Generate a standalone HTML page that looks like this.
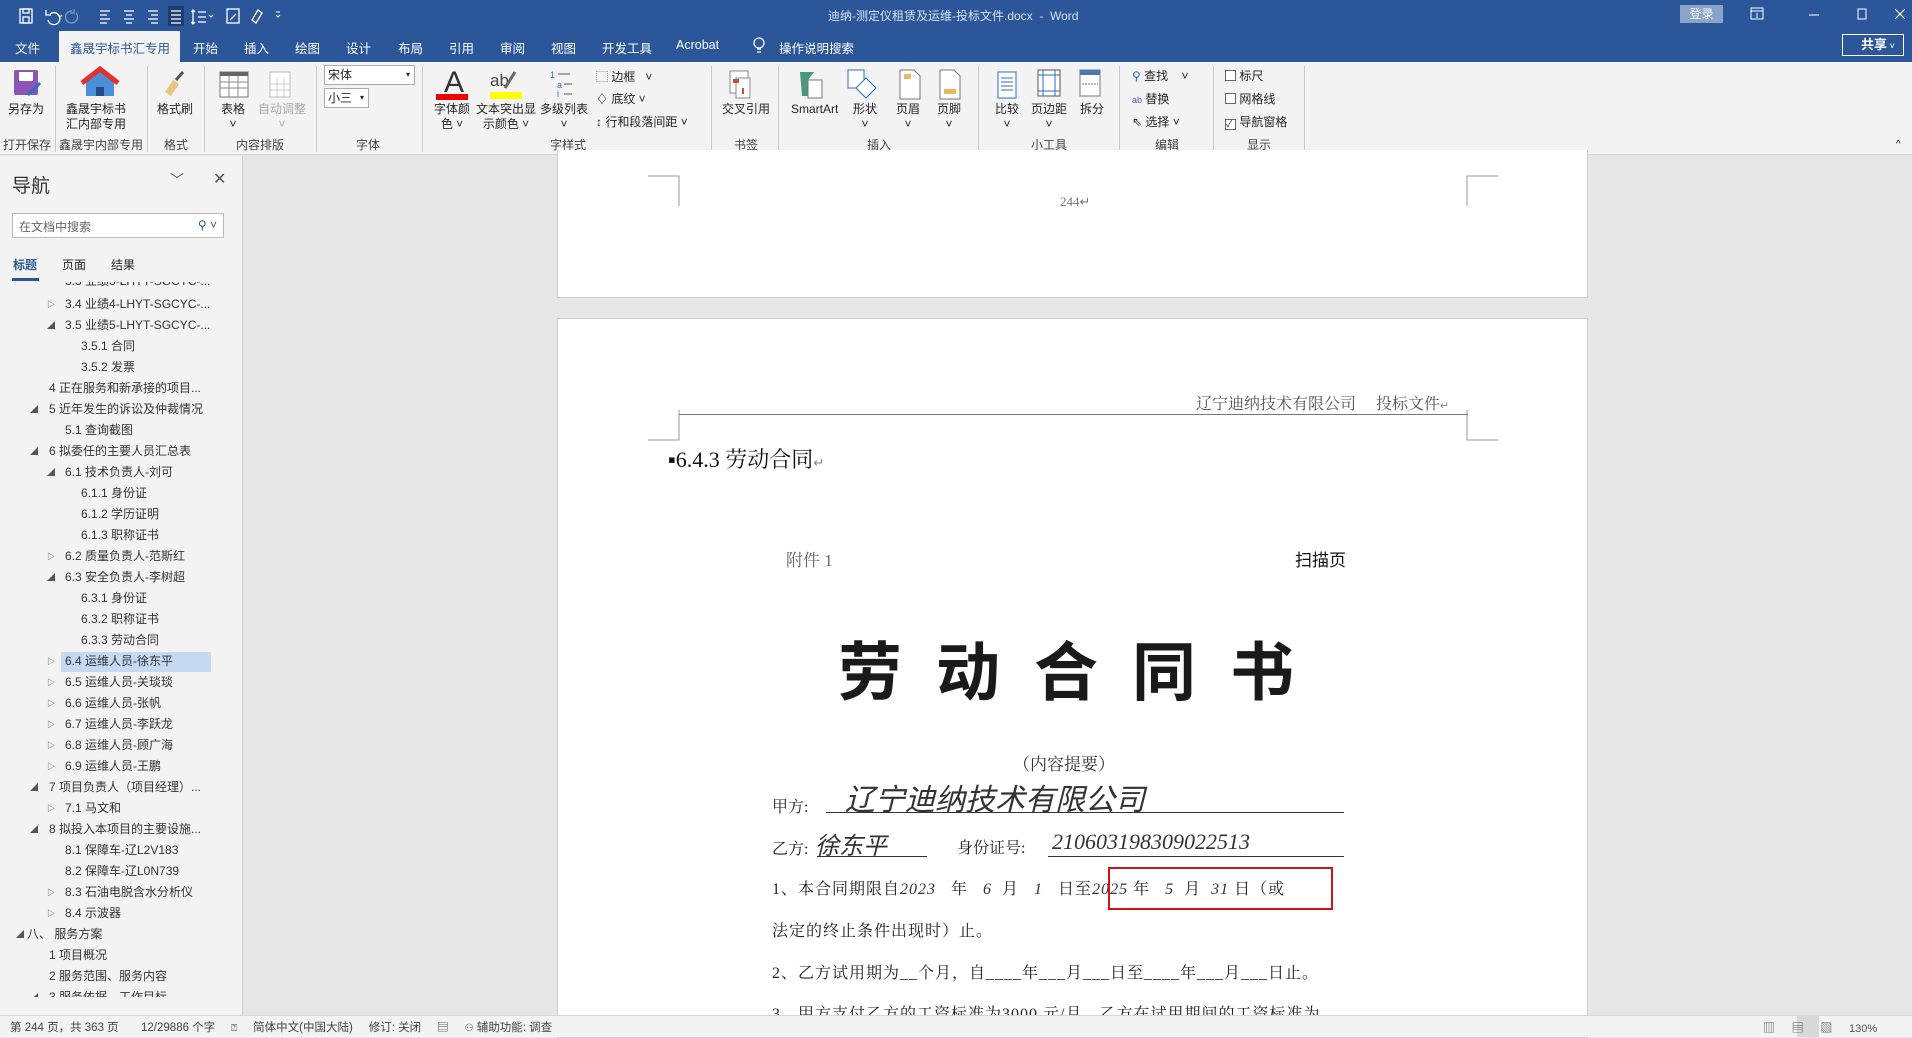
<!DOCTYPE html>
<html><head><meta charset="utf-8">
<style>
*{margin:0;padding:0;box-sizing:border-box}
body{width:1912px;height:1037px;overflow:hidden;position:relative;background:#e6e6e6;font-family:"Liberation Sans","Noto Sans CJK SC",sans-serif;font-size:12px;color:#262626}
.a{position:absolute;white-space:nowrap}
#title{left:0;top:0;width:1912px;height:31px;background:#2b579a}
#tabs{left:0;top:31px;width:1912px;height:31px;background:#2b579a}
.tab{position:absolute;top:38px;color:#fff;font-size:12.5px}
#ribbon{left:0;top:62px;width:1912px;height:93px;background:#f3f3f3;border-bottom:1px solid #d5d5d5}
.sep{position:absolute;top:66px;width:1px;height:86px;background:#c8c8c8}
.gl{position:absolute;top:136px;font-size:12px;color:#444}
.bl{position:absolute;font-size:12px;color:#262626;text-align:center;line-height:15px}
#nav{left:0;top:156px;width:243px;height:859px;background:#f3f3f3;border-right:1px solid #d0d0d0}
.ti{position:absolute;font-size:12px;color:#333;line-height:16px}
.tr{position:absolute;font-size:8px;color:#555}
.page{position:absolute;background:#fff;border:1px solid #cfcfcf}
#status{left:0;top:1015px;width:1912px;height:22px;background:#f3f3f3;border-top:1px solid #d6d6d6;font-size:11.5px;color:#444}
.doc{font-family:"Liberation Serif","Noto Serif CJK SC","Noto Sans CJK SC",serif;color:#222}
.hw{font-family:"Liberation Serif","Noto Sans CJK SC",serif;font-style:italic;color:#333}
.ul{position:absolute;height:1px;background:#333}
</style></head><body>

<div id="title" class="a"></div>
<svg class="a" style="left:16px;top:6px" width="340" height="20" viewBox="0 0 340 20" fill="none" stroke="#fff" stroke-width="1.3">
<rect x="4" y="3" width="12" height="14"/><rect x="7" y="3" width="6" height="4"/><rect x="7" y="11" width="6" height="6"/>
<path d="M34 8 a6 6 0 1 1 -2 6 M30 4 v5 h5"/><path d="M42 9 l2 2 2-2" stroke-width="1"/>
<path d="M56 5 a6 6 0 1 0 4 2 M58 3 v4 h-4" stroke="#7f9cc9"/>
<path d="M84 5h10M84 9h7M84 13h10M84 17h7"/>
<path d="M108 5h10M110 9h6M108 13h10M110 17h6"/>
<path d="M132 5h10M135 9h7M132 13h10M135 17h7"/>
<rect x="152" y="0" width="16" height="20" fill="#1e3c6e" stroke="none"/><path d="M155 5h10M155 9h10M155 13h10M155 17h10"/>
<path d="M177 4v14M175 6l2-2 2 2M175 16l2 2 2-2M182 6h8M182 11h8M182 16h8"/><path d="M193 9l2 2 2-2" stroke-width="1"/>
<rect x="211" y="3" width="12" height="14"/><path d="M214 14l6-6"/>
<path d="M236 14l6-10 4 3-6 10z"/>
<path d="M260 9l2 2 2-2M260 6h4" stroke-width="1"/>
</svg>
<div class="a" style="left:828px;top:7px;color:#d8e0ee;font-size:12px">迪纳-测定仪租赁及运维-投标文件.docx&nbsp; -&nbsp; Word</div>
<div class="a" style="left:1680px;top:5px;width:43px;height:18px;background:#8aa3c8;color:#fff;font-size:12px;text-align:center;line-height:18px">登录</div>
<svg class="a" style="left:1745px;top:5px" width="160" height="20" fill="none" stroke="#fff" stroke-width="1"><rect x="6" y="3" width="12" height="11"/><path d="M6 6h12M12 8v5"/><path d="M64 10h10"/><rect x="113" y="4" width="8" height="10"/><path d="M150 4l10 10M160 4l-10 10"/></svg>

<div id="tabs" class="a"></div>
<div class="a" style="left:59px;top:31px;width:121px;height:31px;background:#f3f3f3"></div>
<div class="tab" style="left:15px">文件</div>
<div class="tab" style="left:70px;color:#2b579a">鑫晟宇标书汇专用</div>
<div class="tab" style="left:193px">开始</div>
<div class="tab" style="left:244px">插入</div>
<div class="tab" style="left:295px">绘图</div>
<div class="tab" style="left:346px">设计</div>
<div class="tab" style="left:398px">布局</div>
<div class="tab" style="left:449px">引用</div>
<div class="tab" style="left:500px">审阅</div>
<div class="tab" style="left:551px">视图</div>
<div class="tab" style="left:602px">开发工具</div>
<div class="tab" style="left:676px">Acrobat</div>
<svg class="a" style="left:752px;top:36px" width="14" height="20" fill="none" stroke="#fff" stroke-width="1.2"><circle cx="7" cy="7" r="5"/><path d="M5 13h4M5 16h4"/></svg>
<div class="tab" style="left:779px">操作说明搜索</div>
<div class="a" style="left:1842px;top:34px;width:62px;height:22px;border:1px solid #fff;color:#fff;font-size:13px;line-height:20px;padding-left:18px;font-weight:bold">共享<span style="font-size:9px;font-weight:normal"> ˅</span></div>

<div id="ribbon" class="a"></div>
<div class="sep" style="left:55px"></div><div class="sep" style="left:147px"></div><div class="sep" style="left:204px"></div><div class="sep" style="left:316px"></div><div class="sep" style="left:422px"></div><div class="sep" style="left:711px"></div><div class="sep" style="left:778px"></div><div class="sep" style="left:978px"></div><div class="sep" style="left:1119px"></div><div class="sep" style="left:1213px"></div><div class="sep" style="left:1304px"></div>
<svg class="a" style="left:0;top:66px" width="1320" height="40">
<rect x="14" y="4" width="24" height="25" rx="2" fill="#8a55b4"/><rect x="19" y="6" width="14" height="9" fill="#fff"/><path d="M28 29l12-12" stroke="#2b6cc4" stroke-width="3"/>
<path d="M86 16l14-11 14 11v14h-28z" fill="#4a8fd8"/><path d="M82 17l18-14 18 14" stroke="#e03030" stroke-width="5" fill="none"/><rect x="96" y="21" width="8" height="9" fill="#204a8a"/>
<path d="M165 26l8-12 6 4-8 12z" fill="#e8c482"/><path d="M176 14l7-8" stroke="#555" stroke-width="3"/>
<rect x="220" y="6" width="28" height="25" fill="#fff" stroke="#777"/><rect x="220" y="6" width="28" height="4" fill="#666"/><path d="M220 16h28M220 22h28M229 10v21M238 10v21" stroke="#888"/>
<rect x="270" y="6" width="20" height="25" fill="#fff" stroke="#bbb"/><path d="M270 18h20M270 24h20M277 12v19M284 12v19" stroke="#ccc"/>
<text x="444" y="26" font-size="30" font-family="Liberation Sans" fill="#333">A</text><rect x="436" y="28" width="32" height="6" fill="#e00"/>
<text x="490" y="20" font-size="17" font-family="Liberation Sans" fill="#444">ab</text><path d="M505 22l10-16" stroke="#666" stroke-width="3"/><rect x="490" y="26" width="32" height="7" fill="#ff0"/>
<text x="550" y="12" font-size="9" fill="#2b6cc4">1</text><text x="557" y="22" font-size="9" fill="#2b6cc4">a</text><text x="557" y="31" font-size="9" fill="#2b6cc4">i</text><path d="M558 8h12M564 18h8M564 28h8" stroke="#555"/>
<rect x="730" y="5" width="18" height="22" fill="#fff" stroke="#888"/><rect x="736" y="12" width="14" height="20" fill="#fff" stroke="#888"/><rect x="733" y="13" width="6" height="4" fill="#d04a3a"/><path d="M743 22v6" stroke="#d04a3a" stroke-width="2"/>
<path d="M800 6h14l-6 8h12v16h-18z" fill="#4a9a7a"/><rect x="808" y="14" width="14" height="18" fill="#fff" stroke="#777"/>
<rect x="848" y="4" width="16" height="18" fill="#fff" stroke="#2b6cc4"/><path d="M866 12l10 10-10 10-10-10z" fill="#fff" stroke="#2b6cc4"/>
<path d="M900 4h14l6 6v23h-20z" fill="#fff" stroke="#777"/><rect x="904" y="8" width="7" height="5" fill="#e8b860"/>
<path d="M940 4h14l6 6v23h-20z" fill="#fff" stroke="#777"/><rect x="944" y="23" width="12" height="5" fill="#e8b860"/>
<rect x="998" y="6" width="18" height="26" fill="#fff" stroke="#2b6cc4"/><path d="M1001 12h12M1001 16h12M1001 20h12M1001 24h12" stroke="#2b6cc4"/>
<rect x="1038" y="4" width="22" height="26" fill="#fff" stroke="#555"/><path d="M1043 4v26M1055 4v26M1038 9h22M1038 25h22" stroke="#2b6cc4"/>
<rect x="1080" y="4" width="20" height="26" fill="#fff" stroke="#777"/><rect x="1080" y="4" width="20" height="5" fill="#4a7ab4"/><path d="M1082 18h16" stroke="#4a7ab4" stroke-dasharray="2 1"/>
</svg>
<div class="bl" style="left:8px;top:102px">另存为</div>
<div class="bl" style="left:66px;top:102px">鑫晟宇标书<br>汇内部专用</div>
<div class="bl" style="left:157px;top:102px">格式刷</div>
<div class="bl" style="left:221px;top:102px">表格<br>˅</div>
<div class="bl" style="left:258px;top:102px;color:#aaa">自动调整<br>˅</div>
<div class="a" style="left:324px;top:65px;width:91px;height:20px;background:#fff;border:1px solid #aaa;font-size:12px;padding-left:3px;line-height:18px">宋体<span style="position:absolute;right:4px;font-size:8px">▾</span></div>
<div class="a" style="left:324px;top:88px;width:45px;height:20px;background:#fff;border:1px solid #aaa;font-size:12px;padding-left:3px;line-height:18px">小三<span style="position:absolute;right:4px;font-size:8px">▾</span></div>
<div class="bl" style="left:434px;top:102px">字体颜<br>色 ˅</div>
<div class="bl" style="left:476px;top:102px">文本突出显<br>示颜色 ˅</div>
<div class="bl" style="left:540px;top:102px">多级列表<br>˅</div>
<div class="bl" style="left:596px;top:70px;text-align:left">⬚ 边框&nbsp;&nbsp; ˅</div>
<div class="bl" style="left:596px;top:92px;text-align:left">♢ 底纹 ˅</div>
<div class="bl" style="left:596px;top:115px;text-align:left">↕ 行和段落间距 ˅</div>
<div class="bl" style="left:722px;top:102px">交叉引用</div>
<div class="bl" style="left:791px;top:102px">SmartArt</div>
<div class="bl" style="left:853px;top:102px">形状<br>˅</div>
<div class="bl" style="left:896px;top:102px">页眉<br>˅</div>
<div class="bl" style="left:937px;top:102px">页脚<br>˅</div>
<div class="bl" style="left:995px;top:102px">比较<br>˅</div>
<div class="bl" style="left:1031px;top:102px">页边距<br>˅</div>
<div class="bl" style="left:1080px;top:102px">拆分</div>
<div class="bl" style="left:1132px;top:69px;text-align:left"><span style="color:#2b6cc4">⚲</span> 查找&nbsp;&nbsp;&nbsp; ˅</div>
<div class="bl" style="left:1132px;top:92px;text-align:left"><span style="color:#7a4ab4;font-size:9px">ab</span> 替换</div>
<div class="bl" style="left:1132px;top:115px;text-align:left">⇖ 选择 ˅</div>
<div class="bl" style="left:1225px;top:69px;text-align:left"><span style="display:inline-block;width:11px;height:11px;border:1px solid #666;background:#fff;vertical-align:-1px"></span> 标尺</div>
<div class="bl" style="left:1225px;top:92px;text-align:left"><span style="display:inline-block;width:11px;height:11px;border:1px solid #666;background:#fff;vertical-align:-1px"></span> 网格线</div>
<div class="bl" style="left:1225px;top:115px;text-align:left"><span style="display:inline-block;width:11px;height:11px;border:1px solid #666;background:#fff;vertical-align:-1px;font-size:9px;line-height:9px">✓</span> 导航窗格</div>
<div class="gl" style="left:3px">打开保存</div>
<div class="gl" style="left:59px">鑫晟宇内部专用</div>
<div class="gl" style="left:164px">格式</div>
<div class="gl" style="left:236px">内容排版</div>
<div class="gl" style="left:356px">字体</div>
<div class="gl" style="left:550px">字样式</div>
<div class="gl" style="left:734px">书签</div>
<div class="gl" style="left:867px">插入</div>
<div class="gl" style="left:1031px">小工具</div>
<div class="gl" style="left:1155px">编辑</div>
<div class="gl" style="left:1247px">显示</div>
<div class="a" style="left:1896px;top:139px;font-size:10px">^</div>

<div id="nav" class="a"></div>
<div class="a" style="left:12px;top:171px;font-size:19px;color:#333">导航</div>
<div class="a" style="left:170px;top:170px;font-size:14px;color:#555">﹀</div>
<div class="a" style="left:213px;top:169px;font-size:16px;color:#555">✕</div>
<div class="a" style="left:12px;top:213px;width:212px;height:25px;background:#fff;border:1px solid #bbb;font-size:12px;color:#666;padding:4px 6px">在文档中搜索<span style="position:absolute;right:6px;color:#2b579a">⚲ ˅</span></div>
<div class="a" style="left:13px;top:256px;font-size:12px;color:#2b579a;font-weight:bold">标题</div>
<div class="a" style="left:12px;top:278px;width:27px;height:3px;background:#2b579a"></div>
<div class="a" style="left:62px;top:256px;font-size:12px">页面</div>
<div class="a" style="left:111px;top:256px;font-size:12px">结果</div>
<div class="a" style="left:0;top:282px;width:242px;height:715px;overflow:hidden">
<div class="a" style="left:61px;top:370px;width:150px;height:20px;background:#c5d9f3"></div>
<div class="ti" style="left:65px;top:-9px">3.3 业绩3-LHYT-SGCYC-...</div>
<div id="tree"></div>
</div>
<script>
var rows=[
[2,'▷','3.4 业绩4-LHYT-SGCYC-...'],[2,'◢','3.5 业绩5-LHYT-SGCYC-...'],[3,'','3.5.1 合同'],[3,'','3.5.2 发票'],
[1,'','4 正在服务和新承接的项目...'],[1,'◢','5 近年发生的诉讼及仲裁情况'],[2,'','5.1 查询截图'],[1,'◢','6 拟委任的主要人员汇总表'],
[2,'◢','6.1 技术负责人-刘可'],[3,'','6.1.1 身份证'],[3,'','6.1.2 学历证明'],[3,'','6.1.3 职称证书'],[2,'▷','6.2 质量负责人-范斯红'],
[2,'◢','6.3 安全负责人-李树超'],[3,'','6.3.1 身份证'],[3,'','6.3.2 职称证书'],[3,'','6.3.3 劳动合同'],[2,'▷','6.4 运维人员-徐东平'],
[2,'▷','6.5 运维人员-关琰琰'],[2,'▷','6.6 运维人员-张帆'],[2,'▷','6.7 运维人员-李跃龙'],[2,'▷','6.8 运维人员-顾广海'],[2,'▷','6.9 运维人员-王鹏'],
[1,'◢','7 项目负责人（项目经理）...'],[2,'▷','7.1 马文和'],[1,'◢','8 拟投入本项目的主要设施...'],[2,'','8.1 保障车-辽L2V183'],[2,'','8.2 保障车-辽L0N739'],
[2,'▷','8.3 石油电脱含水分析仪'],[2,'▷','8.4 示波器'],[0,'◢','八、 服务方案'],[1,'','1 项目概况'],[1,'','2 服务范围、服务内容'],[1,'◢','3 服务依据、工作目标']];
var tx=[27,49,65,81],trx=[16,30,47,60],h='';
rows.forEach(function(r,i){var y=14+i*21;
if(r[1])h+='<div class="tr" style="left:'+trx[r[0]]+'px;top:'+(y+3)+'px">'+r[1]+'</div>';
h+='<div class="ti" style="left:'+tx[r[0]]+'px;top:'+y+'px">'+r[2]+'</div>';});
document.getElementById('tree').outerHTML=h;
</script>

<div class="page" style="left:557px;top:150px;width:1031px;height:148px;border-top:none"></div>
<div class="page" style="left:557px;top:318px;width:1031px;height:720px"></div>
<svg class="a" style="left:640px;top:170px" width="870" height="280" fill="none" stroke="#999" stroke-width="1">
<path d="M8 6h31v30M858 6h-31v30"/>
<path d="M39 240v30h-31M827 240v30h31"/>
</svg>
<div class="a" style="left:1060px;top:194px;font-size:13px;color:#777;font-family:'Liberation Serif',serif">244↵</div>
<div class="a doc" style="left:1196px;top:391px;font-size:16px;color:#555">辽宁迪纳技术有限公司&nbsp;&nbsp;&nbsp;&nbsp; 投标文件<span style="font-size:11px;color:#888">↵</span></div>
<div class="a" style="left:679px;top:414px;width:789px;height:1px;background:#777"></div>
<div class="a doc" style="left:668px;top:443px;font-size:22px;color:#111">▪6.4.3 劳动合同<span style="font-size:13px;color:#888">↵</span></div>
<div class="a doc" style="left:786px;top:546px;font-size:17px;color:#666">附件 1</div>
<div class="a doc" style="left:1295px;top:546px;font-size:17px;color:#111;font-family:'Noto Sans CJK SC',sans-serif">扫描页</div>
<div class="a" style="left:838px;top:628px;font-size:64px;font-weight:bold;color:#1a1a1a;letter-spacing:34px;font-family:'Noto Sans CJK SC',sans-serif;line-height:80px">劳动合同书</div>
<div class="a doc" style="left:1013px;top:750px;font-size:17px;color:#333">（内容提要）</div>
<div class="a doc" style="left:772px;top:794px;font-size:16px">甲方:</div>
<div class="ul" style="left:826px;top:812px;width:518px"></div>
<div class="a hw" style="left:845px;top:775px;font-size:30px">辽宁迪纳技术有限公司</div>
<div class="a doc" style="left:772px;top:836px;font-size:16px">乙方:</div>
<div class="ul" style="left:817px;top:856px;width:110px"></div>
<div class="a hw" style="left:815px;top:826px;font-size:24px">徐东平</div>
<div class="a doc" style="left:957px;top:835px;font-size:16px">身份证号:</div>
<div class="ul" style="left:1048px;top:856px;width:296px"></div>
<div class="a hw" style="left:1052px;top:829px;font-size:22px">210603198309022513</div>
<div class="a doc" style="left:772px;top:876px;font-size:16px;letter-spacing:1px">1、本合同期限自<span class="hw">2023</span>&nbsp;&nbsp; 年&nbsp;&nbsp; <span class="hw">6</span>&nbsp;&nbsp;月&nbsp;&nbsp; <span class="hw">1</span>&nbsp;&nbsp;&nbsp;日至<span class="hw">2025</span>&nbsp;年&nbsp;&nbsp;&nbsp;<span class="hw">5</span>&nbsp;&nbsp;月&nbsp;&nbsp;<span class="hw">31</span>&nbsp;日（或</div>
<div class="a" style="left:1108px;top:867px;width:225px;height:43px;border:2px solid #d0121b"></div>
<div class="a doc" style="left:772px;top:918px;font-size:16px;letter-spacing:1px">法定的终止条件出现时）止。</div>
<div class="a doc" style="left:772px;top:960px;font-size:16px;letter-spacing:1px">2、乙方试用期为__个月，自____年___月___日至____年___月___日止。</div>
<div class="a doc" style="left:772px;top:1001px;font-size:16px;letter-spacing:1px">3、甲方支付乙方的工资标准为3000 元/月，乙方在试用期间的工资标准为</div>

<div id="status" class="a"></div>
<div class="a" style="left:10px;top:1019px;font-size:11.5px;color:#444">第 244 页，共 363 页&nbsp;&nbsp;&nbsp;&nbsp;&nbsp;&nbsp; 12/29886 个字&nbsp;&nbsp;&nbsp;&nbsp; <span style="font-size:10px">⍰</span>&nbsp;&nbsp;&nbsp;&nbsp; 简体中文(中国大陆)&nbsp;&nbsp;&nbsp;&nbsp; 修订: 关闭&nbsp;&nbsp;&nbsp;&nbsp; ▤&nbsp;&nbsp;&nbsp;&nbsp; <span style="font-size:10px">⚇</span> 辅助功能: 调查</div>
<div class="a" style="left:1797px;top:1016px;width:22px;height:21px;background:#d8d8d8"></div>
<div class="a" style="left:1763px;top:1019px;font-size:12px;color:#555">▥&nbsp;&nbsp;&nbsp;&nbsp; ▤&nbsp;&nbsp;&nbsp;&nbsp; ▧&nbsp;&nbsp;&nbsp;&nbsp; <span style="font-size:11px">130%</span></div>
</body></html>
